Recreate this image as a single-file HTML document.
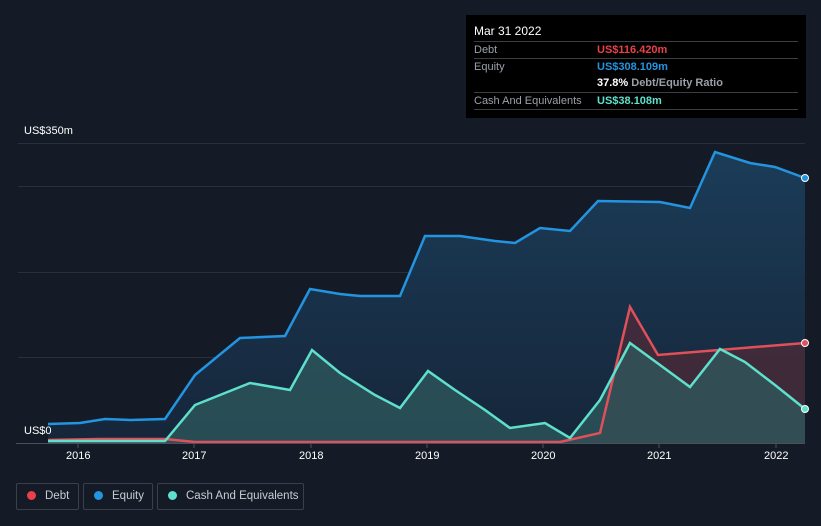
<!DOCTYPE html>
<html><head><meta charset="utf-8"><style>
html,body{margin:0;width:821px;height:526px;background:#151b26;font-family:"Liberation Sans",sans-serif;overflow:hidden;position:relative}
.tt{position:absolute;left:466px;top:15px;width:340px;height:103px;background:#000}
.tt .h{position:absolute;left:8px;top:9px;color:#fff;font-size:12px}
.row{position:absolute;left:8px;width:324px;border-top:1px solid #3a3d42;height:17px;font-size:11px;color:#9aa0a8;line-height:17px;white-space:nowrap}
.row span{position:absolute;left:123px;font-weight:bold}
.lg{position:absolute;top:483px;height:27px;border:1px solid #3a404b;border-radius:2px;color:#c8ccd2;font-size:11.5px;line-height:25px;box-sizing:border-box;white-space:nowrap}
.dot{display:inline-block;width:9px;height:9px;border-radius:50%;margin:0 9px 0 10px;vertical-align:-1px}
.ax{position:absolute;color:#fff;font-size:11px}
</style></head><body>
<svg width="821" height="526" style="position:absolute;left:0;top:0">
<defs><linearGradient id="g1" x1="0" y1="0" x2="0" y2="1"><stop offset="0" stop-color="#1b3c58"/><stop offset="1" stop-color="#16263a"/></linearGradient></defs>
<g stroke="#2a303a" stroke-width="1"><line x1="18" y1="143.5" x2="805" y2="143.5"/><line x1="18" y1="186.5" x2="805" y2="186.5"/><line x1="18" y1="272.5" x2="805" y2="272.5"/><line x1="18" y1="357.5" x2="805" y2="357.5"/></g>
<path d="M48,424 L80,423 105,419 130,420 165,419 195,375 240,338 285,336 310,289 340,294 360,296 400,296 425,236 460,236 495,241 515,243 540,228 570,231 598,201 660,202 690,208 715,152 750,163 775,167 805,178 L805,443 L48,443Z" fill="url(#g1)"/>
<path d="M48,440 L100,439 165,439 195,442 560,442 600,433 630,307 658,355 805,343 L805,443 48,443Z" fill="#4a2a38" opacity="0.8"/>
<path d="M48,441 L165,441 195,405 250,383 290,390 312,350 340,373 375,395 400,408 428,371 455,390 485,410 510,428 545,423 570,438 600,400 630,343 660,365 690,387 720,349 745,362 775,385 805,409 L805,443 48,443Z" fill="#2f5a5e" opacity="0.75"/>
<path d="M48,424 L80,423 105,419 130,420 165,419 195,375 240,338 285,336 310,289 340,294 360,296 400,296 425,236 460,236 495,241 515,243 540,228 570,231 598,201 660,202 690,208 715,152 750,163 775,167 805,178" fill="none" stroke="#2394e0" stroke-width="2.5"/>
<path d="M48,440 L100,439 165,439 195,442 560,442 600,433 630,307 658,355 805,343" fill="none" stroke="#e0505a" stroke-width="2.5"/>
<path d="M48,441 L165,441 195,405 250,383 290,390 312,350 340,373 375,395 400,408 428,371 455,390 485,410 510,428 545,423 570,438 600,400 630,343 660,365 690,387 720,349 745,362 775,385 805,409" fill="none" stroke="#5ee0cc" stroke-width="2.5"/>
<circle cx="805" cy="178" r="3.5" fill="#2394e0" stroke="#fff"/><circle cx="805" cy="343" r="3.5" fill="#e0505a" stroke="#fff"/><circle cx="805" cy="409" r="3.5" fill="#5ee0cc" stroke="#fff"/>
<line x1="16" y1="443.5" x2="805" y2="443.5" stroke="#4a505a"/>
<g stroke="#4a505a"><line x1="78" y1="443" x2="78" y2="448"/><line x1="194" y1="443" x2="194" y2="448"/><line x1="311" y1="443" x2="311" y2="448"/><line x1="427" y1="443" x2="427" y2="448"/><line x1="543" y1="443" x2="543" y2="448"/><line x1="659" y1="443" x2="659" y2="448"/><line x1="776" y1="443" x2="776" y2="448"/></g>
</svg>
<div class="ax" style="left:24px;top:125px">US$350m</div>
<div class="ax" style="left:24px;top:425px">US$0</div>
<div class="ax" style="left:66px;top:450px">2016</div>
<div class="ax" style="left:182px;top:450px">2017</div>
<div class="ax" style="left:299px;top:450px">2018</div>
<div class="ax" style="left:415px;top:450px">2019</div>
<div class="ax" style="left:531px;top:450px">2020</div>
<div class="ax" style="left:647px;top:450px">2021</div>
<div class="ax" style="left:764px;top:450px">2022</div>
<div class="tt"><div class="h">Mar 31 2022</div>
<div class="row" style="top:26px">Debt<span style="color:#e8414a">US$116.420m</span></div>
<div class="row" style="top:43px">Equity<span style="color:#2394e0">US$308.109m</span></div>
<div class="row" style="top:60px;border-top:none"><span style="color:#fff">37.8% <b style="color:#9aa0a8">Debt/Equity Ratio</b></span></div>
<div class="row" style="top:77px">Cash And Equivalents<span style="color:#5ee0cc">US$38.108m</span></div>
<div class="row" style="top:94px"></div>
</div>
<div class="lg" style="left:16px;width:63px"><span class="dot" style="background:#e8414a"></span>Debt</div>
<div class="lg" style="left:83px;width:70px"><span class="dot" style="background:#2394e0"></span>Equity</div>
<div class="lg" style="left:157px;width:147px"><span class="dot" style="background:#5ee0cc"></span>Cash And Equivalents</div>
</body></html>
